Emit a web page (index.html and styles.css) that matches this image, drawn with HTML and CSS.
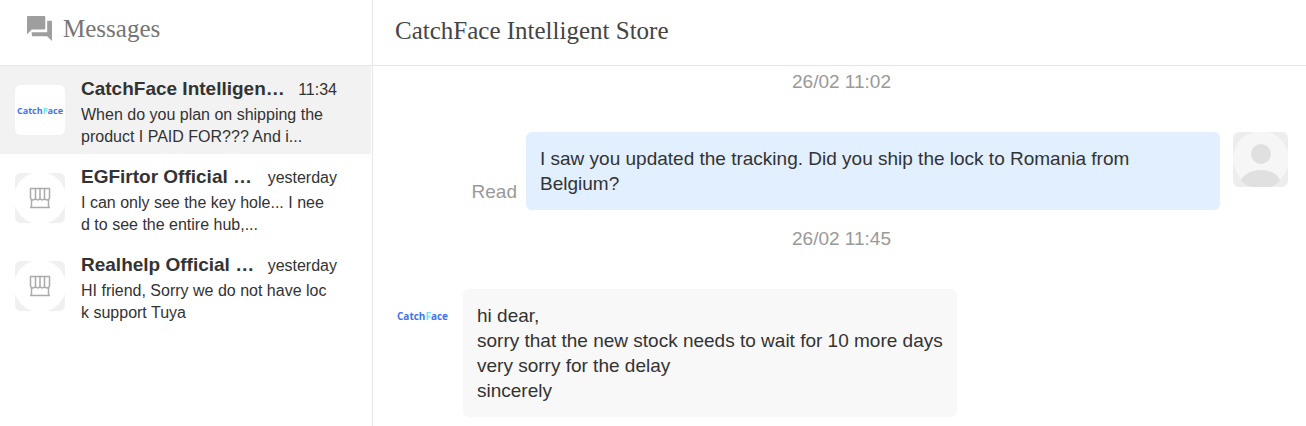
FILE: index.html
```
<!DOCTYPE html>
<html lang="en">
<head>
    <meta charset="UTF-8">
    <meta name="viewport" content="width=device-width, initial-scale=1.0">
    <title>Messages</title>
    <link rel="stylesheet" href="styles.css">
</head>
<body>
    <div class="messenger">
        <aside class="sidebar">
            <header class="sidebar-header">
                <svg class="chat-icon" viewBox="0 0 26 26" aria-hidden="true">
                    <path d="M1 0h17a1 1 0 0 1 1 1v12a1 1 0 0 1-1 1H5l-5 5V1a1 1 0 0 1 1-1z"/>
                    <path d="M21 5h4a1 1 0 0 1 1 1v20l-5-5H6a1 1 0 0 1-1-1v-3h16z"/>
                </svg>
                <h1 class="sidebar-title">Messages</h1>
            </header>
            <nav class="chat-list">
                <a class="chat-item active" href="#catchface">
                    <span class="avatar avatar-logo">Catch<span class="logo-f">F</span>ace</span>
                    <div class="chat-info">
                        <div class="chat-top">
                            <span class="chat-name">CatchFace Intelligen…</span>
                            <span class="chat-time">11:34</span>
                        </div>
                        <p class="chat-preview">When do you plan on shipping the<br>product I PAID FOR??? And i...</p>
                    </div>
                </a>
                <a class="chat-item" href="#egfirtor">
                    <svg class="avatar avatar-store" viewBox="0 0 50 50" aria-hidden="true">
                        <rect class="avatar-back" width="50" height="50"/>
                        <circle class="avatar-disc" cx="25" cy="25" r="26"/>
                        <path class="store-lines" d="M15.500 15.500h19v10q-2.500 3-5 0q-2.300 3-4.500 0q-2.300 3-4.500 0q-2.500 3-5 0zM20.500 15.500v10M25 15.500v10M29.500 15.500v10M16.500 27v7.500M33.500 27v7.500M15 34.500h20"/>
                    </svg>
                    <div class="chat-info">
                        <div class="chat-top">
                            <span class="chat-name">EGFirtor Official …</span>
                            <span class="chat-time">yesterday</span>
                        </div>
                        <p class="chat-preview">I can only see the key hole... I nee<br>d to see the entire hub,...</p>
                    </div>
                </a>
                <a class="chat-item" href="#realhelp">
                    <svg class="avatar avatar-store" viewBox="0 0 50 50" aria-hidden="true">
                        <rect class="avatar-back" width="50" height="50"/>
                        <circle class="avatar-disc" cx="25" cy="25" r="26"/>
                        <path class="store-lines" d="M15.500 15.500h19v10q-2.500 3-5 0q-2.300 3-4.500 0q-2.300 3-4.500 0q-2.500 3-5 0zM20.500 15.500v10M25 15.500v10M29.500 15.500v10M16.500 27v7.500M33.500 27v7.500M15 34.500h20"/>
                    </svg>
                    <div class="chat-info">
                        <div class="chat-top">
                            <span class="chat-name">Realhelp Official …</span>
                            <span class="chat-time">yesterday</span>
                        </div>
                        <p class="chat-preview">HI friend, Sorry we do not have loc<br>k support Tuya</p>
                    </div>
                </a>
            </nav>
        </aside>

        <main class="conversation">
            <header class="conversation-header">
                <h2 class="conversation-title">CatchFace Intelligent Store</h2>
            </header>
            <div class="message-list">
                <div class="date">26/02 11:02</div>
                <div class="message sent">
                    <span class="status">Read</span>
                    <p class="bubble">I saw you updated the tracking. Did you ship the lock to Romania from Belgium?</p>
                    <svg class="avatar-large" viewBox="0 0 55 55" aria-hidden="true">
                        <rect class="user-back" width="55" height="55"/>
                        <circle class="user-disc" cx="28" cy="27" r="28"/>
                        <circle class="user-shape" cx="28" cy="22" r="10"/>
                        <path class="user-shape" d="M8 48q6-10 20-10t19 10q-5 7-12 7H20q-7 0-12-7z"/>
                    </svg>
                </div>
                <div class="date">26/02 11:45</div>
                <div class="message received">
                    <span class="avatar-large avatar-logo">Catch<span class="logo-f">F</span>ace</span>
                    <p class="bubble">hi dear,<br>sorry that the new stock needs to wait for 10 more days<br>very sorry for the delay<br>sincerely</p>
                </div>
            </div>
        </main>
    </div>
</body>
</html>
```
FILE: styles.css
```
* {
    box-sizing: border-box;
}
body {
    margin: 0;
    background: #fff;
    color: #333;
    font-family: "Liberation Sans", Arial, sans-serif;
}
h1, h2, p {
    margin: 0;
    font-weight: normal;
}
.messenger {
    display: flex;
    min-height: 100vh;
}

/* conversation list */
.sidebar {
    width: 373px;
    flex-shrink: 0;
    border-right: 1px solid #e6e6e6;
}
.sidebar-header,
.conversation-header {
    display: flex;
    align-items: center;
    height: 66px;
    padding-bottom: 8px;
    border-bottom: 1px solid #e6e6e6;
}
.sidebar-header {
    gap: 11px;
    padding-left: 27px;
}
.chat-icon {
    width: 25px;
    height: 25px;
    fill: #9e9e9e;
}
.sidebar-title,
.conversation-title {
    font-family: "Liberation Serif", "Times New Roman", serif;
    font-size: 25px;
    line-height: 28px;
}
.sidebar-title {
    color: #757575;
}
.chat-item {
    display: flex;
    gap: 16px;
    height: 88px;
    margin-right: 1px;
    padding: 11px 34px 0 15px;
    color: #333;
    text-decoration: none;
}
.chat-item.active {
    background: #f2f2f2;
}
.avatar {
    width: 50px;
    height: 50px;
    margin-top: 8px;
    flex-shrink: 0;
    border-radius: 6px;
}
.avatar-logo {
    display: flex;
    align-items: center;
    justify-content: center;
    background: #fff;
    color: #3f74e8;
    font-family: "Open Sans", sans-serif;
    font-size: 9px;
    font-weight: bold;
}
.logo-f {
    color: #6fe3f5;
}
.avatar-back {
    fill: #f0f0f0;
}
.avatar-disc {
    fill: #fff;
}
.store-lines {
    fill: none;
    stroke: #aaa;
    stroke-width: 1.5;
}
.chat-info {
    flex: 1;
    min-width: 0;
}
.chat-top {
    display: flex;
    align-items: baseline;
    gap: 8px;
    line-height: 24px;
}
.chat-name {
    flex: 1;
    overflow: hidden;
    white-space: nowrap;
    text-overflow: ellipsis;
    font-size: 19px;
    font-weight: bold;
}
.chat-time {
    font-size: 16px;
}
.chat-preview {
    height: 41px;
    margin-top: 2px;
    overflow: hidden;
    font-size: 16px;
    line-height: 22px;
}

/* open conversation */
.conversation {
    flex: 1;
    min-width: 0;
}
.conversation-header {
    padding-left: 22px;
    padding-bottom: 4px;
}
.conversation-title {
    color: #444;
}
.message-list {
    padding: 3px 18px 8px 22px;
    font-size: 19px;
    line-height: 25px;
}
.date {
    margin-bottom: 38px;
    color: #999;
    text-align: center;
}
.message {
    display: flex;
    align-items: flex-start;
    gap: 13px;
    margin-bottom: 16px;
}
.sent {
    justify-content: flex-end;
}
.bubble {
    max-width: calc(100% - 199px);
    padding: 14px;
    border-radius: 6px;
}
.sent .bubble {
    background: #e1efff;
}
.received .bubble {
    background: #f8f8f8;
}
.status {
    align-self: flex-end;
    margin-right: -4px;
    margin-bottom: 6px;
    color: #999;
}
.avatar-large {
    width: 55px;
    height: 55px;
    flex-shrink: 0;
    border-radius: 6px;
}
.avatar-large.avatar-logo {
    font-size: 10px;
}
.user-back {
    fill: #ededed;
}
.user-disc {
    fill: #f6f6f6;
}
.user-shape {
    fill: #e0e0e0;
}
```
